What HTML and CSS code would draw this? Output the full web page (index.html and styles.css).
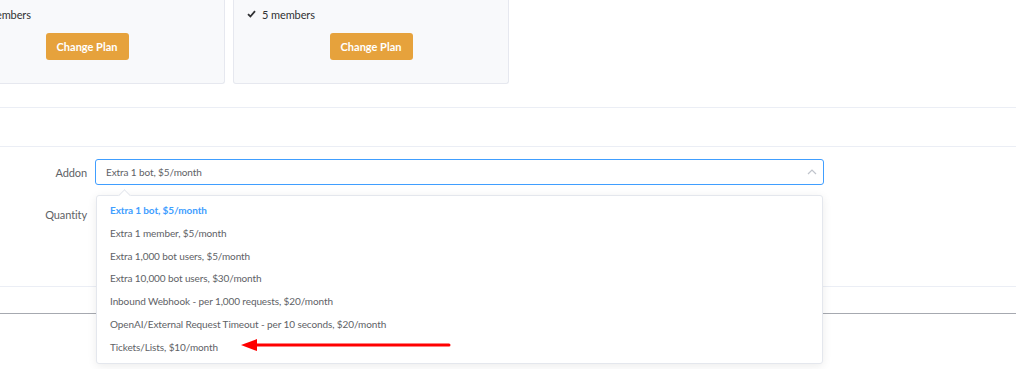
FILE: index.html
```html
<!DOCTYPE html>
<html>

<head>
  <meta charset="UTF-8">
  <meta name="viewport" content="width=device-width, initial-scale=1.0">
  <title>Billing</title>
  <link rel="stylesheet" href="styles.css">
</head>

<body>
  <div class="plans">
    <div class="plan">
      <ul class="features">
        <li>
          <svg class="check" width="9" height="8" viewBox="0 0 9 8">
            <path d="M1 4.2 L3.4 6.5 L8 1.2" fill="none" stroke="#303133" stroke-width="1.8" />
          </svg>5 members
        </li>
      </ul>
      <button class="plan-button">Change Plan</button>
    </div>
    <div class="plan">
      <ul class="features">
        <li>
          <svg class="check" width="9" height="8" viewBox="0 0 9 8">
            <path d="M1 4.2 L3.4 6.5 L8 1.2" fill="none" stroke="#303133" stroke-width="1.8" />
          </svg>5 members
        </li>
      </ul>
      <button class="plan-button">Change Plan</button>
    </div>
  </div>

  <div class="spacer"></div>

  <div class="addon-form">
    <div class="form-row">
      <label class="form-label">Addon</label>
      <div class="select-wrap">
        <div class="select-input">
          <span>Extra 1 bot, $5/month</span>
          <svg class="chevron" width="10" height="6" viewBox="0 0 10 6">
            <path d="M1 5 L5 1 L9 5" fill="none" stroke="#c0c4cc" stroke-width="1.2" />
          </svg>
        </div>
        <div class="dropdown">
          <div class="caret"></div>
          <ul class="options">
            <li class="option selected">Extra 1 bot, $5/month</li>
            <li class="option">Extra 1 member, $5/month</li>
            <li class="option">Extra 1,000 bot users, $5/month</li>
            <li class="option">Extra 10,000 bot users, $30/month</li>
            <li class="option">Inbound Webhook - per 1,000 requests, $20/month</li>
            <li class="option">OpenAI/External Request Timeout - per 10 seconds, $20/month</li>
            <li class="option">Tickets/Lists, $10/month</li>
          </ul>
          <svg class="pointer" width="212" height="14" viewBox="0 0 212 14">
            <line x1="12" y1="7" x2="208" y2="7" stroke="#ff0000" stroke-width="3" stroke-linecap="round" />
            <polygon points="0,7 16,1 16,13" fill="#ff0000" />
          </svg>
        </div>
      </div>
    </div>
    <div class="form-row">
      <label class="form-label">Quantity</label>
      <div class="select-wrap"></div>
    </div>
  </div>

  <div class="footer-line"></div>
</body>

</html>
```

FILE: styles.css
```css
html,
body {
  min-height: 369px;
}

body {
  margin: 0;
  background-color: #fff;
  font-family: Lato, "Open Sans", sans-serif;
  font-size: 10px;
  letter-spacing: -0.1px;
  color: #606266;
}

.plans {
  display: flex;
  gap: 8px;
  margin-left: -51px;
  padding-bottom: 23px;
  border-bottom: 1px solid #ebeef5;
}

.plan {
  width: 276px;
  height: 84px;
  box-sizing: border-box;
  padding: 6px 13px 0;
  background-color: #f8f9fb;
  border: 1px solid #e6e8ef;
  border-top: none;
  border-radius: 0 0 3px 3px;
  text-align: center;
}

.features {
  list-style: none;
  margin: 0;
  padding: 0;
  text-align: left;
  color: #303133;
  font-size: 11px;
}

.features li {
  display: flex;
  align-items: center;
  height: 16px;
}

.check {
  margin-right: 6px;
}

.plan-button {
  margin-top: 11px;
  width: 83px;
  height: 27px;
  border: none;
  border-radius: 3px;
  background-color: #e6a23c;
  color: #fff;
  font-family: Lato, "Open Sans", sans-serif;
  font-size: 11px;
  font-weight: bold;
}

.spacer {
  height: 38px;
  border-bottom: 1px solid #ebeef5;
}

.addon-form {
  padding: 12px 0 59px;
  border-bottom: 1px solid #ebeef5;
}

.form-row {
  display: flex;
  align-items: center;
  height: 26px;
  margin-bottom: 16px;
}

.form-row:last-child {
  margin-bottom: 0;
}

.form-label {
  width: 95px;
  padding-right: 8px;
  box-sizing: border-box;
  text-align: right;
  font-size: 11px;
  color: #606266;
}

.select-wrap {
  position: relative;
  width: 729px;
}

.select-input {
  display: flex;
  align-items: center;
  justify-content: space-between;
  height: 26px;
  box-sizing: border-box;
  padding: 0 6px 0 10px;
  border: 1px solid #409eff;
  border-radius: 3px;
  color: #606266;
}

.dropdown {
  position: absolute;
  top: 36px;
  left: 1px;
  right: 1px;
  z-index: 2;
  background-color: #fff;
  border: 1px solid #e4e7ed;
  border-radius: 3px;
  box-shadow: 0 2px 10px rgba(0, 0, 0, 0.08);
}

.caret {
  position: absolute;
  top: -5px;
  left: 23px;
  width: 8px;
  height: 8px;
  background-color: #fff;
  border-top: 1px solid #e4e7ed;
  border-left: 1px solid #e4e7ed;
  transform: rotate(45deg);
}

.options {
  list-style: none;
  margin: 0;
  padding: 3px 0 4px;
}

.option {
  height: 22.8px;
  line-height: 22.8px;
  padding: 0 13px;
  color: #606266;
}

.option.selected {
  color: #409eff;
  font-weight: bold;
}

.pointer {
  position: absolute;
  left: 144px;
  top: 142px;
}

.footer-line {
  height: 26px;
  border-bottom: 1px solid #a6a9b0;
}
```
